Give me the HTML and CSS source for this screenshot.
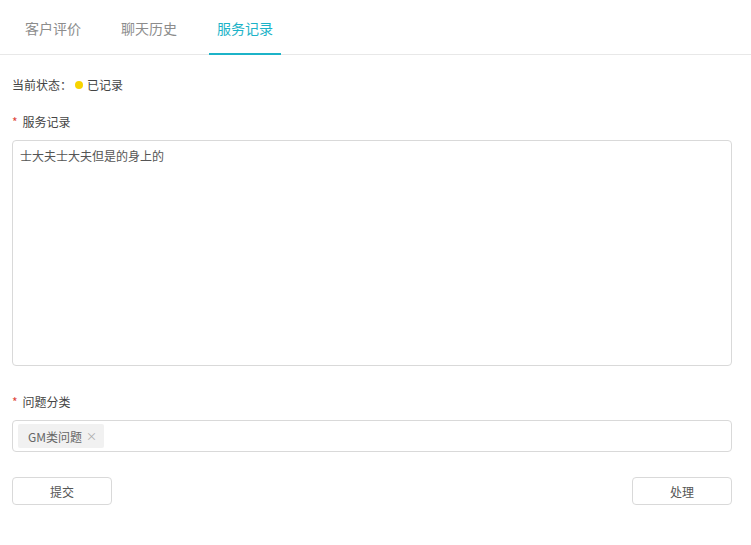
FILE: index.html
```html
<!DOCTYPE html>
<html lang="zh">
<head>
<meta charset="utf-8">
<link rel="stylesheet" href="styles.css">
</head>
<body>
<div class="tabs">
  <div class="tab">客户评价</div>
  <div class="tab">聊天历史</div>
  <div class="tab active">服务记录</div>
</div>
<div class="content">
  <div class="status">当前状态：<span class="dot"></span>已记录</div>
  <div class="label"><span class="req">*</span>服务记录</div>
  <div class="textarea">士大夫士大夫但是的身上的</div>
  <div class="label label2"><span class="req">*</span>问题分类</div>
  <div class="select"><span class="tag">GM类问题<span class="x">×</span></span></div>
  <div class="actions">
    <button class="btn">提交</button>
    <button class="btn">处理</button>
  </div>
</div>
</body>
</html>
```
FILE: styles.css
```css
* { box-sizing: border-box; }
body {
  margin: 0;
  font-family: "Noto Sans CJK SC", "Noto Sans", sans-serif;
  color: #444;
  background: #fff;
  font-size: 12px;
}
.tabs {
  display: flex;
  gap: 24px;
  padding-left: 17px;
  height: 55px;
  border-bottom: 1px solid #e8e8e8;
}
.tab {
  padding: 0 8px;
  font-size: 14px;
  color: #8c8c8c;
  display: flex;
  align-items: center;
  height: 55px;
  padding-top: 3px;
  border-bottom: 2px solid transparent;
}
.tab.active {
  color: #1cb3c8;
  border-bottom-color: #1cb3c8;
}
.content {
  padding: 0 19px 0 12px;
}
.status {
  margin-top: 21px;
  height: 18px;
  line-height: 18px;
  display: flex;
  align-items: center;
}
.dot {
  width: 8px;
  height: 8px;
  border-radius: 50%;
  background: #f7d400;
  margin: 0 4px 0 3px;
}
.label {
  margin-top: 19px;
  height: 18px;
  line-height: 18px;
  display: flex;
  align-items: center;
}
.label2 { margin-top: 27px; }
.req {
  color: #e0453a;
  margin-right: 5px;
  font-size: 12px;
}
.textarea {
  margin-top: 9px;
  height: 226px;
  border: 1px solid #d9d9d9;
  border-radius: 4px;
  padding: 6px 7px;
  color: #555;
  line-height: 18px;
}
.select {
  margin-top: 9px;
  height: 32px;
  border: 1px solid #d9d9d9;
  border-radius: 4px;
  padding: 3px 5px;
  display: flex;
  align-items: center;
}
.tag {
  background: #f1f1f1;
  border-radius: 2px;
  height: 24px;
  padding: 0 7px 0 10px;
  display: flex;
  align-items: center;
  color: #666;
}
.x {
  color: #aaa;
  font-size: 11px;
  margin-left: 4px;
}
.actions {
  margin-top: 25px;
  display: flex;
  justify-content: space-between;
}
.btn {
  width: 100px;
  height: 28px;
  border: 1px solid #d9d9d9;
  border-radius: 4px;
  background: #fff;
  font-family: inherit;
  font-size: 12px;
  color: #555;
  padding: 0;
}
```
